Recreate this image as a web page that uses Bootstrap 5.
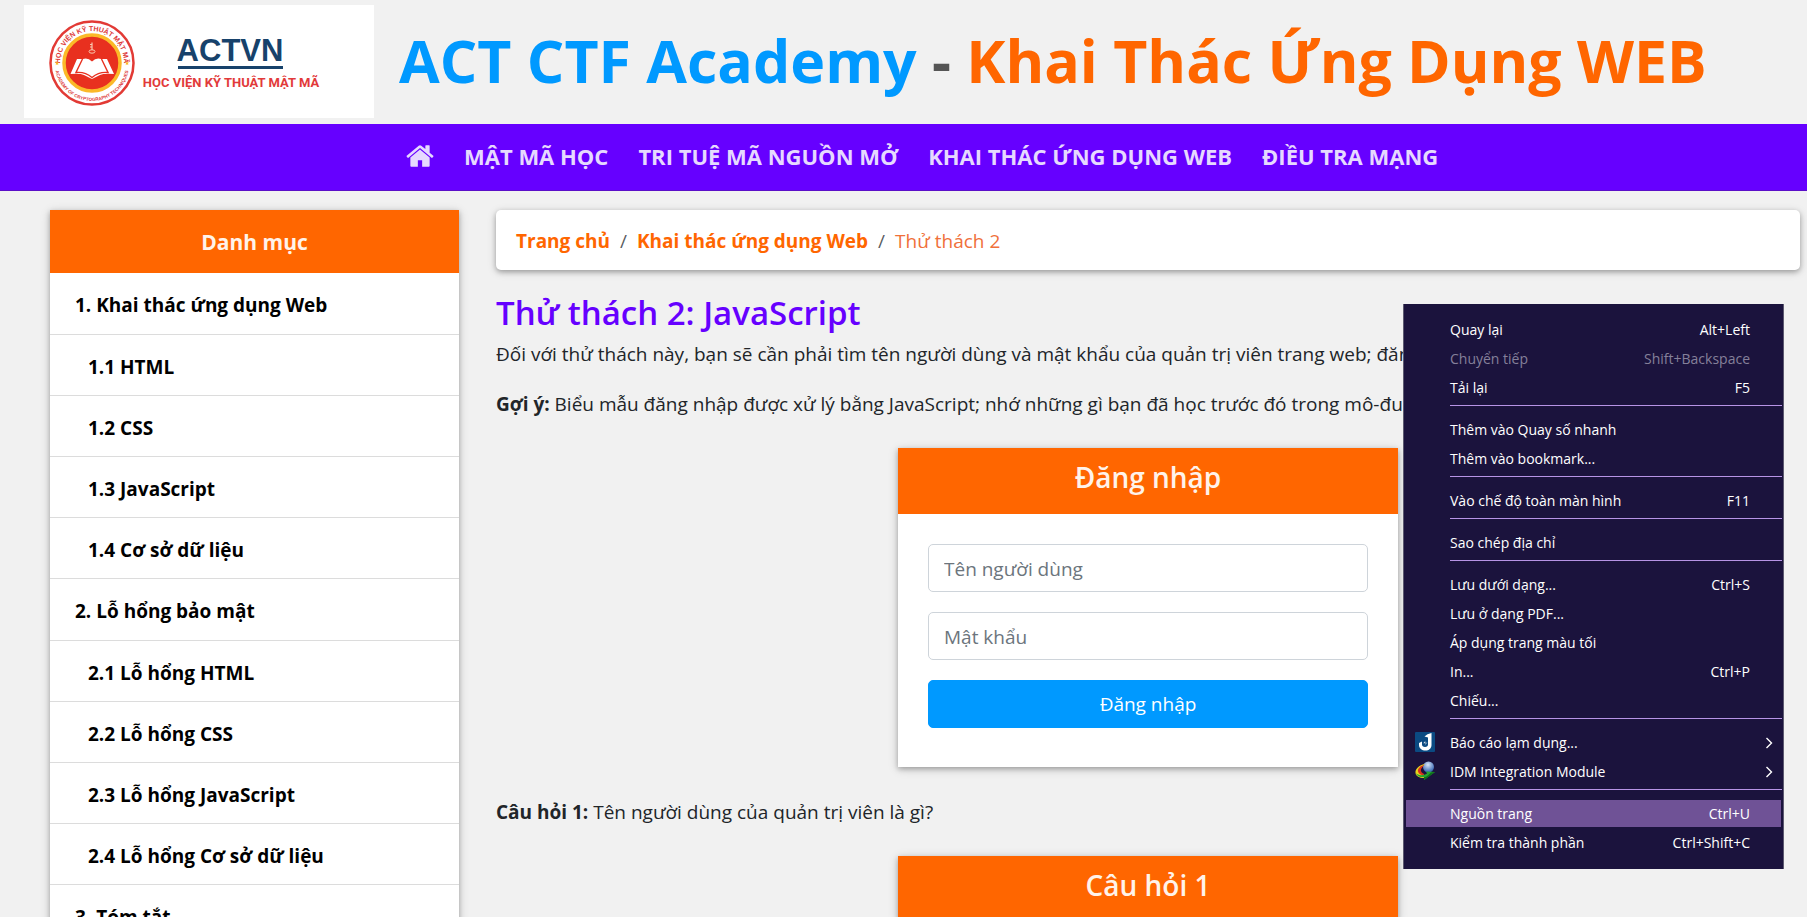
<!DOCTYPE html>
<html lang="vi">
<head>
<meta charset="utf-8">
<meta name="viewport" content="width=device-width, initial-scale=1">
<title>ACT CTF Academy - Khai Thác Ứng Dụng WEB</title>
<link rel="stylesheet" href="https://cdn.jsdelivr.net/npm/bootstrap@5.3.0/dist/css/bootstrap.min.css">
<style>
  :root { --act-orange: #ff6600; --act-blue: #0099ff; --act-purple: #6600ff; }
  body { font-family: "Open Sans", "Noto Sans", sans-serif; font-size: 19px; line-height: 30px; color: #212529; background: #f1f1f1; }
  a { text-decoration: none; }

  .site-head { padding: 5px 24px 6px; gap: 25px; }
  .site-logo { width: 350px; height: 113px; background: #fff; }
  .site-title { font-size: 59px; line-height: 72px; font-weight: 700; color: #555; padding-bottom: 3px; }
  .txt-blue { color: var(--act-blue); }
  .txt-orange { color: var(--act-orange); }

  .site-nav { background: var(--act-purple); border-bottom: 1px solid #5a0fc8; padding: 0 0 2px 391px; height: 67px; }
  .site-nav .nav-link { color: #e6d9ff; font-size: 22px; line-height: 30px; font-weight: 700; padding: 8px 15px; }

  .page-grid { display: grid; grid-template-columns: minmax(0, 409fr) minmax(0, 1304fr); column-gap: 37px; padding: 19px 7px 0 50px; }
  .lifted { box-shadow: 0 2px 10px rgba(0, 0, 0, .16), 0 2px 5px rgba(0, 0, 0, .26); }

  .side-list { background: #fff; }
  .side-head { background: var(--act-orange); color: #fff3ea; font-size: 21px; font-weight: 700; padding: 17px 0 16px; margin: 0; line-height: 30px; }
  .side-list a { display: block; color: #000; font-weight: 700; font-size: 19px; line-height: 30px; border-bottom: 1px solid #dcdcdc; padding: 17px 25px 14px; }
  .side-list .sub-item { padding: 17px 38px 13px; }

  .crumbs { background: #fff; border-radius: 5px; padding: 16px 20px 14px; margin-bottom: 20px; --bs-breadcrumb-item-padding-x: 10px; }
  .crumbs a { font-weight: 700; color: var(--act-orange); }
  .crumbs .active { color: #f0703a; }
  .lesson-title { font-size: 33px; line-height: 45px; font-weight: 600; color: var(--act-purple); margin: 0; }
  .lesson-text { margin-bottom: 20px; white-space: nowrap; }

  .quiz-card { width: 500px; max-width: 100%; background: #fff; margin: 29px auto 30px; padding: 0; }
  .quiz-head { background: var(--act-orange); color: #fff3ea; font-size: 28px; line-height: 36px; font-weight: 600; padding: 11px 0 19px; margin: 0; }
  .quiz-body { padding: 30px 30px 39px; gap: 20px; }
  .quiz-body .form-control { font-size: 19px; line-height: 30px; padding: 9px 15px 7px; border-radius: 5px; border-color: #ced4da; height: 48px; }
  .quiz-body .form-control::placeholder { color: #6c757d; }
  .quiz-body .btn { background: var(--act-blue); color: #fff; font-size: 19px; line-height: 30px; padding: 8px; border-radius: 5px; border: 1px solid var(--act-blue); }

  .ctx-menu { position: absolute; top: 304px; right: 23px; width: 381px; background: #1b133d; border: solid #5d5a70; border-width: 0 1px; padding: 11px 0 12px; font-size: 14px; }
  .ctx-menu button { display: flex; align-items: center; width: 100%; height: 29px; padding: 0 33px 0 46px; background: none; border: 0; color: #fff; font-size: 14px; line-height: 20px; position: relative; }
  .ctx-menu button:disabled { color: #85809a; }
  .ctx-menu button.picked { background: linear-gradient(#6f5296, #6f5296) 2px 1px / calc(100% - 4px) 27px no-repeat; }
  .ctx-menu hr { margin: 3px 1px 9px 46px; border-top: 1px solid #b794e6; opacity: 1; }
  .ctx-menu .ctx-icon { position: absolute; left: 11px; top: 4px; }
  .ctx-menu .ctx-arrow { margin-left: auto; margin-right: -23px; }
</style>
</head>
<body class="vh-100 overflow-hidden position-relative">

<header class="site-head d-flex align-items-center">
  <a href="#" class="site-logo d-block flex-shrink-0" aria-label="ACTVN">
    <svg width="350" height="113" viewBox="0 0 350 113">
      <defs>
        <path id="arcTop" d="M36 58a32 32 0 0 1 64 0"/>
        <path id="arcBottom" d="M31 59a37 37 0 0 0 74 0"/>
      </defs>
      <circle cx="68" cy="58" r="41.500" fill="#fff" stroke="#e23a35" stroke-width="2.500"/>
      <circle cx="68" cy="58" r="28" fill="#e8301f" stroke="#fbb928" stroke-width="3.500"/>
      <g font-family="Liberation Sans, sans-serif" font-weight="700" fill="#dd3a3a">
        <text font-size="7" text-anchor="middle"><textPath href="#arcTop" startOffset="50%">HỌC VIỆN KỸ THUẬT MẬT MÃ</textPath></text>
        <text font-size="4.600" text-anchor="middle"><textPath href="#arcBottom" startOffset="50%">ACADEMY OF CRYPTOGRAPHY TECHNIQUES</textPath></text>
      </g>
      <g fill="#fbb928">
        <path d="M33 56l.6 1.500 1.600.1-1.300 1 .5 1.600-1.400-.9-1.400.9.500-1.600-1.300-1 1.600-.1z"/>
        <path d="M103 56l.6 1.500 1.600.1-1.300 1 .5 1.600-1.400-.9-1.400.9.500-1.600-1.300-1 1.600-.1z"/>
      </g>
      <path d="M46.500 69L53 54h6q5-1.500 9 2.500 4-4 9-2.500h6l7 15q-10-1-14 1l-8 4-8-4q-4-2-13.500-1z" fill="#fff"/>
      <path d="M58.500 54L52 67.500q9-1 16 5 7-6 16-5L77.500 54" fill="none" stroke="#e8301f" stroke-width="1.400"/>
      <path d="M68 37.500v7.500M66 39.500h2M66 42h2" stroke="#f8c9b0" stroke-width="1.200" fill="none"/>
      <ellipse cx="68" cy="46.500" rx="3" ry="1.700" stroke="#f8c9b0" fill="none"/>
      <text x="206" y="56" text-anchor="middle" font-family="Liberation Sans, sans-serif" font-weight="700" font-size="31" fill="#17426b">ACTVN</text>
      <path d="M154 62.500h105" stroke="#17426b" stroke-width="3"/>
      <text x="207" y="82" text-anchor="middle" font-family="Roboto, sans-serif" font-weight="700" font-size="13" fill="#e23a3a">HỌC VIỆN KỸ THUẬT MẬT MÃ</text>
    </svg>
  </a>
  <h1 class="site-title m-0 text-nowrap"><span class="txt-blue">ACT CTF Academy</span> - <span class="txt-orange">Khai Thác Ứng Dụng WEB</span></h1>
</header>

<nav class="site-nav d-flex align-items-center">
  <ul class="nav flex-nowrap text-nowrap align-items-center">
    <li class="nav-item"><a class="nav-link d-flex" href="#" aria-label="Trang chủ"><svg width="28" height="30" viewBox="0 0 1664 1792" fill="currentColor"><path d="M1408 992v480q0 26-19 45t-45 19h-384v-384h-256v384h-384q-26 0-45-19t-19-45v-480q0-1 .5-3t.5-3l575-474 575 474q1 2 1 6zm223-69l-62 74q-8 9-21 11h-3q-13 0-21-7l-692-577-692 577q-12 8-24 7-13-2-21-11l-62-74q-8-10-7-23.500t11-21.500l719-599q32-26 76-26t76 26l244 204v-195q0-14 9-23t23-9h192q14 0 23 9t9 23v408l219 182q10 8 11 21.500t-7 23.500z"/></svg></a></li>
    <li class="nav-item"><a class="nav-link" href="#">MẬT MÃ HỌC</a></li>
    <li class="nav-item"><a class="nav-link" href="#">TRI TUỆ MÃ NGUỒN MỞ</a></li>
    <li class="nav-item"><a class="nav-link" href="#">KHAI THÁC ỨNG DỤNG WEB</a></li>
    <li class="nav-item"><a class="nav-link" href="#">ĐIỀU TRA MẠNG</a></li>
  </ul>
</nav>

<div class="page-grid">
  <aside class="side-list lifted">
    <h2 class="side-head text-center">Danh mục</h2>
    <a href="#">1. Khai thác ứng dụng Web</a>
    <a href="#" class="sub-item">1.1 HTML</a>
    <a href="#" class="sub-item">1.2 CSS</a>
    <a href="#" class="sub-item">1.3 JavaScript</a>
    <a href="#" class="sub-item">1.4 Cơ sở dữ liệu</a>
    <a href="#">2. Lỗ hổng bảo mật</a>
    <a href="#" class="sub-item">2.1 Lỗ hổng HTML</a>
    <a href="#" class="sub-item">2.2 Lỗ hổng CSS</a>
    <a href="#" class="sub-item">2.3 Lỗ hổng JavaScript</a>
    <a href="#" class="sub-item">2.4 Lỗ hổng Cơ sở dữ liệu</a>
    <a href="#">3. Tóm tắt</a>
  </aside>

  <main>
    <nav aria-label="breadcrumb">
      <ol class="breadcrumb crumbs lifted">
        <li class="breadcrumb-item"><a href="#">Trang chủ</a></li>
        <li class="breadcrumb-item"><a href="#">Khai thác ứng dụng Web</a></li>
        <li class="breadcrumb-item active" aria-current="page">Thử thách 2</li>
      </ol>
    </nav>
    <h2 class="lesson-title">Thử thách 2: JavaScript</h2>
    <p class="lesson-text pt-1">Đối với thử thách này, bạn sẽ cần phải tìm tên người dùng và mật khẩu của quản trị viên trang web; đăng nhập để tiếp tục.</p>
    <p class="lesson-text"><b>Gợi ý:</b> Biểu mẫu đăng nhập được xử lý bằng JavaScript; nhớ những gì bạn đã học trước đó trong mô-đun này.</p>

    <form class="quiz-card lifted">
      <h3 class="quiz-head text-center">Đăng nhập</h3>
      <div class="quiz-body d-grid">
        <input type="text" class="form-control" placeholder="Tên người dùng" aria-label="Tên người dùng">
        <input type="password" class="form-control" placeholder="Mật khẩu" aria-label="Mật khẩu">
        <button type="button" class="btn">Đăng nhập</button>
      </div>
    </form>

    <p class="lesson-text"><b>Câu hỏi 1:</b> Tên người dùng của quản trị viên là gì?</p>

    <section class="quiz-card lifted">
      <h3 class="quiz-head text-center">Câu hỏi 1</h3>
    </section>
  </main>
</div>

<div class="ctx-menu">
  <button type="button">Quay lại <span class="ms-auto">Alt+Left</span></button>
  <button type="button" disabled>Chuyển tiếp <span class="ms-auto">Shift+Backspace</span></button>
  <button type="button">Tải lại <span class="ms-auto">F5</span></button>
  <hr>
  <button type="button">Thêm vào Quay số nhanh</button>
  <button type="button">Thêm vào bookmark...</button>
  <hr>
  <button type="button">Vào chế độ toàn màn hình <span class="ms-auto">F11</span></button>
  <hr>
  <button type="button">Sao chép địa chỉ</button>
  <hr>
  <button type="button">Lưu dưới dạng... <span class="ms-auto">Ctrl+S</span></button>
  <button type="button">Lưu ở dạng PDF...</button>
  <button type="button">Áp dụng trang màu tối</button>
  <button type="button">In... <span class="ms-auto">Ctrl+P</span></button>
  <button type="button">Chiếu...</button>
  <hr>
  <button type="button">
    <svg class="ctx-icon" width="20" height="20" viewBox="0 0 20 20"><rect width="20" height="20" rx="1" fill="#0b4a82"/><path d="M9.500 4.500Q12 1.500 16.500 1v12c0 3.500-2.500 5.500-6 5.500S4 16.500 4 13v-2l3-1.500v3c0 1.500 1 2.500 3 2.500s3-1 3-2.500V5.500z" fill="#fff"/><path d="M10.500 8.500L8 11.500h2.500L9.500 14l3-3.500h-2z" fill="#fff" stroke="#0b4a82" stroke-width=".6"/></svg>
    Báo cáo lạm dụng...
    <svg class="ctx-arrow" width="8" height="12" viewBox="0 0 8 12" fill="none" stroke="#fff" stroke-width="1.400"><path d="M1.500 1l5 5-5 5"/></svg>
  </button>
  <button type="button">
    <svg class="ctx-icon" width="20" height="20" viewBox="0 0 20 20"><defs><radialGradient id="globe" cx=".45" cy=".3" r=".7"><stop offset="0" stop-color="#d8e6f8"/><stop offset="1" stop-color="#2f5fae"/></radialGradient></defs><circle cx="13.500" cy="6" r="5.500" fill="url(#globe)"/><path d="M10 3C4 4 0 8 .5 12c.5 3.500 4 5 8.500 5v-3c-3-.5-4.500-2-4-4.500S8 5 10 3z" fill="#e9d51c"/><path d="M9 4C5 5 2.500 8 3 10.500S6 14 9 14.500v-1.500C6.500 12 5.500 10 6 8z" fill="#d8341f"/><path d="M.7 12c1 3 4 4.500 8.300 4.300V19l11-8-9-.5 1 2C8 15 3 14.500.7 12z" fill="#25a52f"/><path d="M9 16.300V19l11-8-4 .5c-2 2-4 4.500-7 4.800z" fill="#0d6d1a"/></svg>
    IDM Integration Module
    <svg class="ctx-arrow" width="8" height="12" viewBox="0 0 8 12" fill="none" stroke="#fff" stroke-width="1.400"><path d="M1.500 1l5 5-5 5"/></svg>
  </button>
  <hr>
  <button type="button" class="picked">Nguồn trang <span class="ms-auto">Ctrl+U</span></button>
  <button type="button">Kiểm tra thành phần <span class="ms-auto">Ctrl+Shift+C</span></button>
</div>

<script src="https://cdn.jsdelivr.net/npm/bootstrap@5.3.0/dist/js/bootstrap.bundle.min.js"></script>
</body>
</html>
